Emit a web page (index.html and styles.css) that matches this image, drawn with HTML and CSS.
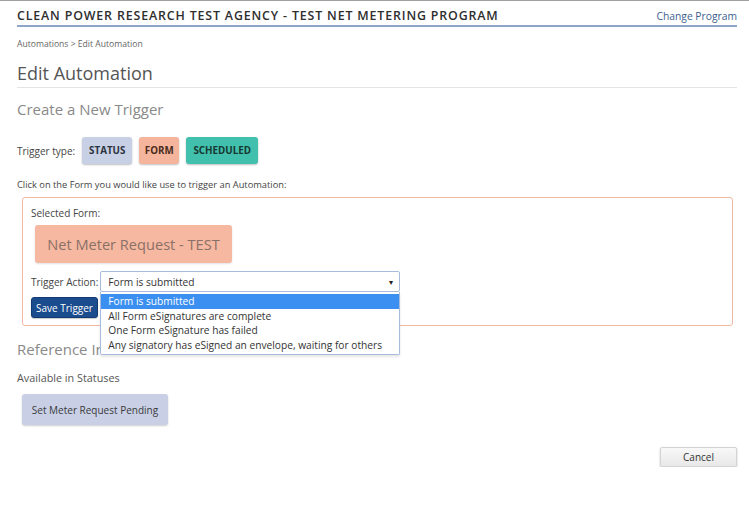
FILE: index.html
```html
<!DOCTYPE html>
<html lang="en">
<head>
<meta charset="utf-8">
<title>Edit Automation</title>
<link rel="stylesheet" href="styles.css">
</head>
<body>
<div class="page">
  <header class="topbar">
    <div class="program-title">CLEAN POWER RESEARCH TEST AGENCY - TEST NET METERING PROGRAM</div>
    <a class="change-link" href="#">Change Program</a>
  </header>
  <div class="breadcrumb">Automations &gt; Edit Automation</div>
  <h1 class="page-title">Edit Automation</h1>
  <h2 class="section-title">Create a New Trigger</h2>

  <div class="type-row">
    <span class="label">Trigger type:</span>
    <button class="type-btn status">STATUS</button>
    <button class="type-btn form">FORM</button>
    <button class="type-btn scheduled">SCHEDULED</button>
  </div>

  <p class="hint">Click on the Form you would like use to trigger an Automation:</p>

  <div class="form-box">
    <div class="label">Selected Form:</div>
    <div class="selected-form">Net Meter Request - TEST</div>
    <div class="action-row">
      <span class="label">Trigger Action:</span>
      <div class="select-wrap">
        <div class="select">
          <span>Form is submitted</span>
          <span class="arrow">&#9662;</span>
        </div>
        <ul class="options">
          <li class="active">Form is submitted</li>
          <li>All Form eSignatures are complete</li>
          <li>One Form eSignature has failed</li>
          <li>Any signatory has eSigned an envelope, waiting for others</li>
        </ul>
      </div>
    </div>
    <button class="save-btn">Save Trigger</button>
  </div>

  <h2 class="section-title ref">Reference Information</h2>
  <div class="label avail">Available in Statuses</div>
  <div class="status-chip">Set Meter Request Pending</div>

  <div class="footer">
    <button class="cancel-btn">Cancel</button>
  </div>
</div>
</body>
</html>
```

FILE: styles.css
```css
* { box-sizing: border-box; }
html, body { margin: 0; padding: 0; background: #fff; }
body {
  font-family: "Open Sans", "Noto Sans", sans-serif;
  color: #444;
  border-top: 1px solid #a0a0a0;
}
.page {
  padding: 0 12px 0 17px;
}
.topbar {
  display: flex;
  justify-content: space-between;
  align-items: baseline;
  padding-top: 6px;
  padding-bottom: 1px;
  border-bottom: 2px solid #8ea6c6;
}
.program-title {
  font-size: 12.4px;
  letter-spacing: 0.85px;
  color: #2e2e2e;
  font-weight: 600;
  line-height: 17px;
}
.change-link {
  font-size: 10.3px;
  color: #3b5f8f;
  text-decoration: none;
}
.breadcrumb {
  font-size: 8.6px;
  color: #666;
  margin-top: 10px;
  line-height: 14px;
}
.page-title {
  font-size: 18px;
  font-weight: 400;
  color: #555;
  margin: 10px 0 0;
  line-height: 24px;
  padding-bottom: 2px;
  border-bottom: 1px solid #e4e4e4;
}
.section-title {
  font-size: 15px;
  font-weight: 400;
  color: #8a8a8a;
  margin: 11px 0 0;
  line-height: 20px;
}
.label {
  font-size: 10px;
  color: #444;
}
.type-row {
  display: flex;
  align-items: center;
  gap: 7px;
  margin-top: 18px;
}
.type-btn {
  font-family: inherit;
  font-weight: 700;
  font-size: 9.8px;
  height: 27px;
  border: none;
  border-radius: 3px;
  padding: 0;
  box-shadow: 0 1px 2px rgba(0,0,0,0.25);
  cursor: pointer;
}
.type-btn.status { background: #c8d0e5; color: #2c3340; width: 50px; }
.type-btn.form { background: #f5b59c; color: #4a2c20; width: 40px; }
.type-btn.scheduled { background: #41c0ad; color: #173832; width: 72px; }
.hint {
  font-size: 9.3px;
  color: #444;
  margin: 14px 0 0;
  line-height: 13px;
}
.form-box {
  margin: 6px 4px 0 5px;
  border: 1px solid #f1b9a3;
  border-radius: 3px;
  padding: 8px 8px 7px 8px;
  display: flex;
  flex-direction: column;
  align-items: flex-start;
}
.selected-form {
  margin: 5px 0 0 4px;
  width: 197px;
  height: 38px;
  background: #f6b8a0;
  border-radius: 3px;
  box-shadow: 0 1px 2px rgba(0,0,0,0.12);
  color: #8b7067;
  font-size: 14.6px;
  display: flex;
  align-items: center;
  justify-content: center;
}
.action-row {
  display: flex;
  align-items: center;
  gap: 2px;
  margin-top: 8px;
}
.select-wrap {
  position: relative;
}
.select {
  width: 300px;
  height: 21px;
  border: 1px solid #a8bbdc;
  border-radius: 2px;
  display: flex;
  align-items: center;
  justify-content: space-between;
  padding: 0 6px 0 7px;
  font-size: 10.2px;
  color: #333;
}
.select .arrow { font-size: 8px; color: #222; }
.options {
  position: absolute;
  left: 0;
  top: 21px;
  width: 300px;
  margin: 0;
  padding: 2px 0 2px;
  list-style: none;
  background: #fff;
  border: 1px solid #a8bbdc;
  border-top: none;
  border-radius: 0 0 2px 2px;
  box-shadow: 0 2px 3px rgba(0,0,0,0.1);
  z-index: 5;
}
.options li {
  font-size: 10.2px;
  color: #333;
  line-height: 14.5px;
  padding: 0 7px;
}
.options li.active {
  background: #3b8ff0;
  color: #fff;
}
.save-btn {
  margin-top: 5px;
  font-family: inherit;
  font-size: 10px;
  color: #fff;
  background: #1b4c8e;
  border: 1px solid #123a70;
  border-radius: 3px;
  height: 21px;
  width: 67px;
  padding: 0;
  box-shadow: 0 1px 1px rgba(0,0,0,0.2);
}
.section-title.ref {
  margin-top: 13px;
}
.avail {
  margin-top: 11px;
  font-size: 10.8px;
  color: #555;
}
.status-chip {
  margin: 9px 0 0 5px;
  width: 146px;
  height: 31px;
  background: #c9d0e6;
  border-radius: 3px;
  box-shadow: 0 1px 2px rgba(0,0,0,0.2);
  font-size: 10px;
  color: #3a3a3a;
  display: flex;
  align-items: center;
  justify-content: center;
}
.footer {
  display: flex;
  justify-content: flex-end;
  margin-top: 22px;
}
.cancel-btn {
  font-family: inherit;
  font-size: 10px;
  color: #333;
  width: 77px;
  height: 20px;
  background: linear-gradient(#f8f8f8, #e8e8e8);
  border: 1px solid #d4d4d4;
  border-radius: 2px;
  box-shadow: 0 1px 2px rgba(0,0,0,0.25);
  padding: 0;
}
```
